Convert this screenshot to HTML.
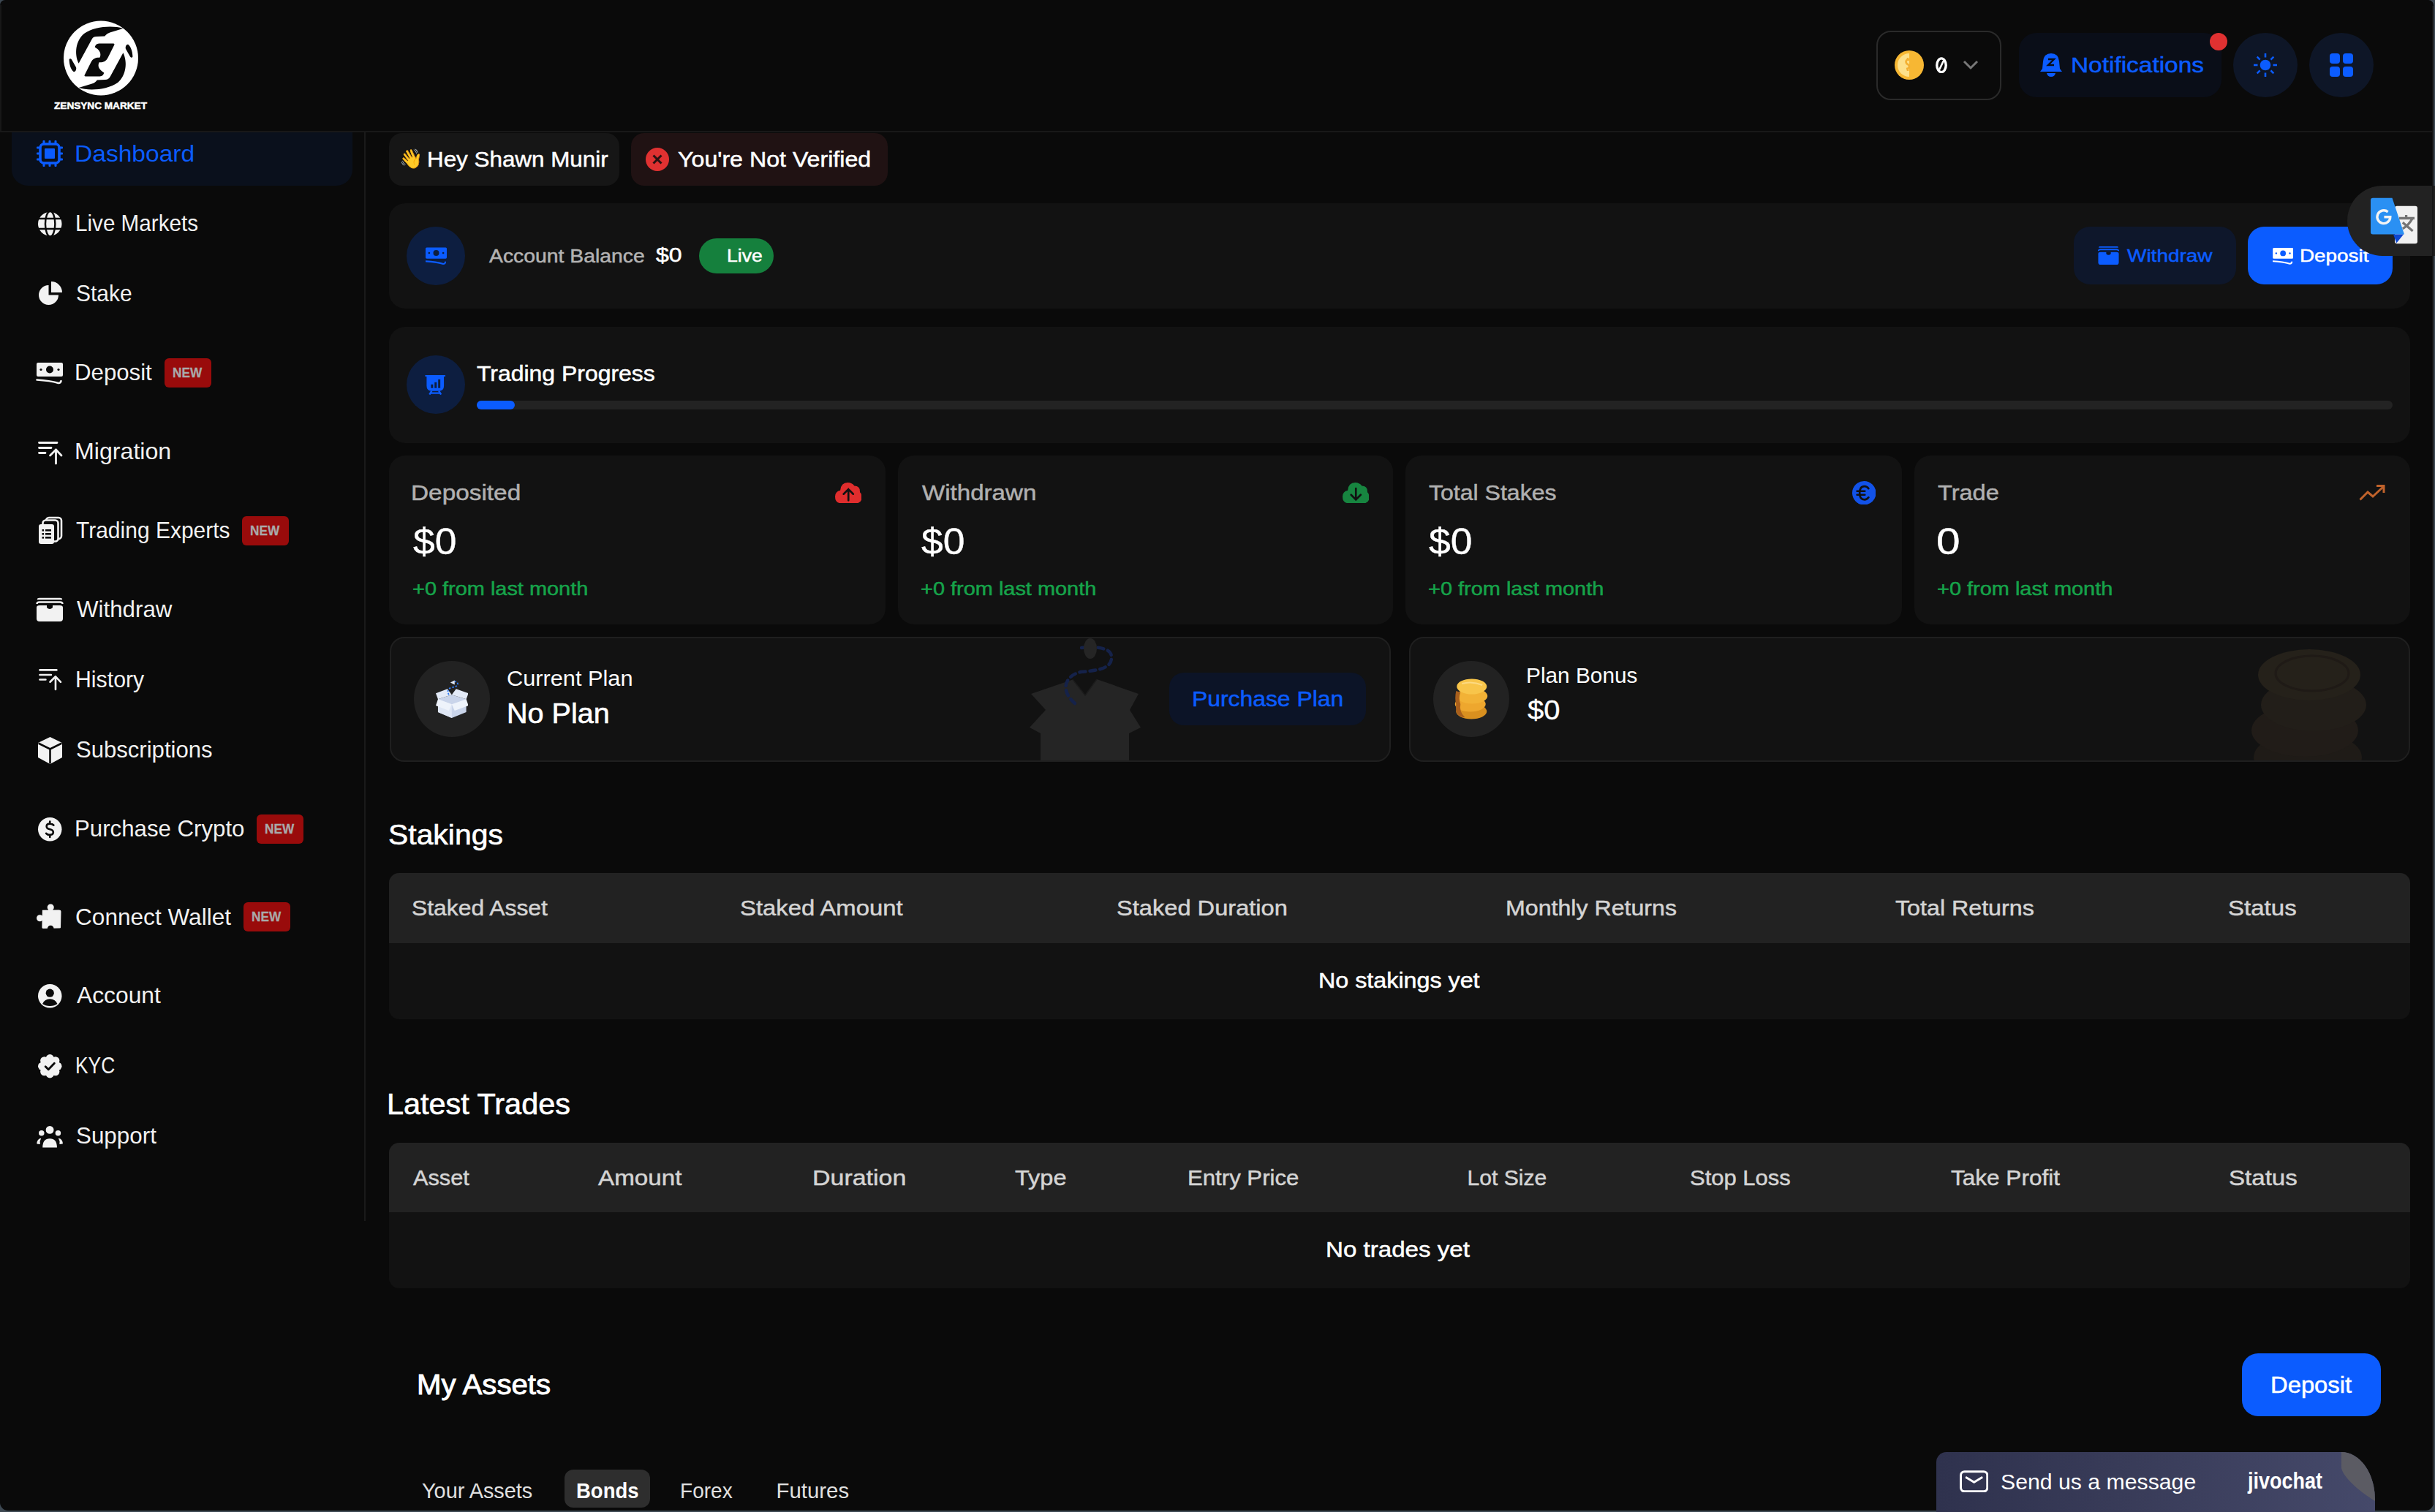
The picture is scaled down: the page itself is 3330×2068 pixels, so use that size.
<!DOCTYPE html>
<html><head><meta charset="utf-8"><title>Dashboard</title>
<style>
html,body{margin:0;padding:0;background:#3d4852;}
body{width:3330px;height:2068px;position:relative;overflow:hidden;font-family:"Liberation Sans",sans-serif;}
</style></head><body>
<div style="position:absolute;left:0;top:0;width:3328px;height:2066px;background:#0a0a0a;border-radius:7px 7px 11px 11px;"></div>
<div style="position:absolute;left:0px;top:179px;width:3328px;height:2px;background:#181818;"></div>
<div style="position:absolute;left:0px;top:7px;width:2px;height:174px;background:#181818;"></div>
<svg style="position:absolute;left:84px;top:26px;width:108px;height:108px;" viewBox="0 0 108 108"><circle cx="54" cy="53.5" r="51" fill="#fff"/><path d="M84.3 12.9 C70 8.5 45 10 31 20 C20 29 17 47 23.6 60.7 L41.4 27.9 C43 25 45 24 48 24 L59.3 23.6 C61 21 63 19.5 67.9 17.9 Z" fill="#0a0a0a"/><path d="M45.7 38.6 C47 34.5 49 33.6 53 33.6 L71 33.6 C72.5 33.6 73 34.5 72 36 L63.5 53 C61 58 57 59.5 52 59.3 L46 59.3 C52 56 55 50 52.5 45 C51 42 48 40 45.7 38.6 Z" fill="#0a0a0a"/><path d="M10.7 57 C10 54 12.5 53.5 14 55.5 L20 66 C21 69 19 73 16.5 72 C13 69 11 63 10.7 57 Z" fill="#0a0a0a"/><g transform="rotate(180 54 53.5)"><path d="M84.3 12.9 C70 8.5 45 10 31 20 C20 29 17 47 23.6 60.7 L41.4 27.9 C43 25 45 24 48 24 L59.3 23.6 C61 21 63 19.5 67.9 17.9 Z" fill="#0a0a0a"/><path d="M10.7 57 C10 54 12.5 53.5 14 55.5 L20 66 C21 69 19 73 16.5 72 C13 69 11 63 10.7 57 Z" fill="#0a0a0a"/></g><g transform="rotate(180 54 53.5) translate(4 -5)"><path d="M45.7 38.6 C47 34.5 49 33.6 53 33.6 L71 33.6 C72.5 33.6 73 34.5 72 36 L63.5 53 C61 58 57 59.5 52 59.3 L46 59.3 C52 56 55 50 52.5 45 C51 42 48 40 45.7 38.6 Z" fill="#0a0a0a"/></g></svg>
<span id="t1" style="position:absolute;left:74.19px;top:137.92px;font-size:13.08px;line-height:13.08px;font-weight:700;color:#fff;white-space:nowrap;font-family:'Liberation Sans', sans-serif;transform:scaleX(1.0399);transform-origin:0 0;-webkit-text-stroke:0.5px #fff;">ZENSYNC MARKET</span>
<div style="position:absolute;left:2565.5px;top:41.5px;width:171.0px;height:95.0px;background:transparent;border-radius:20px;box-sizing:border-box;border:2.5px solid #2a2a2a;"></div>
<svg style="position:absolute;left:2591px;top:69px;width:40px;height:40px;" viewBox="0 0 40 40"><circle cx="20" cy="20" r="20" fill="#f7b733"/><path d="M20 4 A16 16 0 0 0 20 36 Z" fill="#fde08a"/><path d="M20 13 Q16 12 15.5 15 Q15.5 18 18 19 Q20 20 20 22 Q20 25 16 25 M18 10 V13 M18 25 V28" stroke="#f3b033" stroke-width="2.6" fill="none"/></svg>
<svg style="position:absolute;left:2647px;top:77.5px;width:16px;height:22.5px;" viewBox="0 0 16 22.5"><ellipse cx="8" cy="11.25" rx="6.2" ry="9.4" fill="none" stroke="#fff" stroke-width="3.4"/><path d="M10.5 6 L5.5 16.5" stroke="#fff" stroke-width="2.6" stroke-linecap="round"/></svg>
<svg style="position:absolute;left:2684px;top:82px;width:22px;height:14px;" viewBox="0 0 22 14"><path d="M2 2 L11 11 L20 2" stroke="#777" stroke-width="3" fill="none"/></svg>
<div style="position:absolute;left:2761px;top:45px;width:277px;height:88px;background:#0a0e18;border-radius:24px;"></div>
<svg style="position:absolute;left:2790px;top:72px;width:30px;height:33px;" viewBox="0 0 30 33"><path d="M15 1 Q25 1 26 12 L27 22 L30 26 H0 L3 22 L4 12 Q5 1 15 1 Z" fill="#0b5cff"/><path d="M9 28 Q10 33 15 33 Q20 33 21 28 Z" fill="#0b5cff"/><path d="M11 9 H19 L11 17 H19" stroke="#0a0e18" stroke-width="2.4" fill="none"/></svg>
<span id="t2" style="position:absolute;left:2832.26px;top:74.02px;font-size:29.51px;line-height:29.51px;font-weight:400;color:#0b5cff;white-space:nowrap;font-family:'Liberation Sans', sans-serif;transform:scaleX(1.1323);transform-origin:0 0;-webkit-text-stroke:0.50px #0b5cff;">Notifications</span>
<svg style="position:absolute;left:3022px;top:45px;width:24px;height:24px;" viewBox="0 0 24 24"><circle cx="12" cy="12" r="12" fill="#e03131"/></svg>
<div style="position:absolute;left:3054px;top:45px;width:88px;height:88px;background:#0e1627;border-radius:50%;"></div>
<svg style="position:absolute;left:3082px;top:73px;width:32px;height:32px;" viewBox="0 0 32 32"><circle cx="16" cy="16" r="7.3" fill="#0b5cff"/><line x1="26.50" y1="16.00" x2="32.00" y2="16.00" stroke="#0b5cff" stroke-width="2.6"/><line x1="23.42" y1="23.42" x2="27.31" y2="27.31" stroke="#0b5cff" stroke-width="2.6"/><line x1="16.00" y1="26.50" x2="16.00" y2="32.00" stroke="#0b5cff" stroke-width="2.6"/><line x1="8.58" y1="23.42" x2="4.69" y2="27.31" stroke="#0b5cff" stroke-width="2.6"/><line x1="5.50" y1="16.00" x2="0.00" y2="16.00" stroke="#0b5cff" stroke-width="2.6"/><line x1="8.58" y1="8.58" x2="4.69" y2="4.69" stroke="#0b5cff" stroke-width="2.6"/><line x1="16.00" y1="5.50" x2="16.00" y2="0.00" stroke="#0b5cff" stroke-width="2.6"/><line x1="23.42" y1="8.58" x2="27.31" y2="4.69" stroke="#0b5cff" stroke-width="2.6"/></svg>
<div style="position:absolute;left:3158px;top:45px;width:88px;height:88px;background:#0e1627;border-radius:50%;"></div>
<svg style="position:absolute;left:3186px;top:73px;width:32px;height:32px;" viewBox="0 0 32 32"><rect x="0" y="0" width="14" height="14" rx="4" fill="#0b5cff"/><rect x="18" y="0" width="14" height="14" rx="4" fill="#0b5cff"/><rect x="0" y="18" width="14" height="14" rx="4" fill="#0b5cff"/><rect x="18" y="18" width="14" height="14" rx="4" fill="#0b5cff"/></svg>
<div style="position:absolute;left:498px;top:181px;width:2px;height:1489px;background:#1a1a1a;"></div>
<div style="position:absolute;left:16px;top:181px;width:466px;height:73px;background:#0a101c;border-radius:0 0 22px 22px;"></div>
<span id="t3" style="position:absolute;left:102.25px;top:194.56px;font-size:30.52px;line-height:30.52px;font-weight:400;color:#0b5cff;white-space:nowrap;font-family:'Liberation Sans', sans-serif;transform:scaleX(1.0999);transform-origin:0 0;">Dashboard</span>
<svg style="position:absolute;left:50px;top:192px;width:36px;height:36px;overflow:visible;" viewBox="0 0 36 36"><rect x="8.5" y="0" width="3" height="6" rx="1" fill="#0b5cff"/><rect x="8.5" y="30" width="3" height="6" rx="1" fill="#0b5cff"/><rect x="0" y="8.5" width="6" height="3" ry="1" fill="#0b5cff"/><rect x="30" y="8.5" width="6" height="3" ry="1" fill="#0b5cff"/><rect x="16.5" y="0" width="3" height="6" rx="1" fill="#0b5cff"/><rect x="16.5" y="30" width="3" height="6" rx="1" fill="#0b5cff"/><rect x="0" y="16.5" width="6" height="3" ry="1" fill="#0b5cff"/><rect x="30" y="16.5" width="6" height="3" ry="1" fill="#0b5cff"/><rect x="24.5" y="0" width="3" height="6" rx="1" fill="#0b5cff"/><rect x="24.5" y="30" width="3" height="6" rx="1" fill="#0b5cff"/><rect x="0" y="24.5" width="6" height="3" ry="1" fill="#0b5cff"/><rect x="30" y="24.5" width="6" height="3" ry="1" fill="#0b5cff"/><rect x="5" y="5" width="26" height="26" rx="5" fill="none" stroke="#0b5cff" stroke-width="3.6"/><rect x="11" y="11" width="14" height="14" rx="1" fill="#0b5cff"/></svg>
<span id="t4" style="position:absolute;left:102.57px;top:290.46px;font-size:30.52px;line-height:30.52px;font-weight:400;color:#f2f2f2;white-space:nowrap;font-family:'Liberation Sans', sans-serif;transform:scaleX(0.9712);transform-origin:0 0;">Live Markets</span>
<svg style="position:absolute;left:51.7px;top:290px;width:32.5px;height:32.5px;overflow:visible;" viewBox="0 0 32 32"><circle cx="16" cy="16" r="16" fill="#f2f2f2"/><ellipse cx="16.4" cy="16" rx="6.6" ry="17" fill="none" stroke="#0a0a0a" stroke-width="2.4"/><path d="M0 8.8 H32 M0 22.6 H32" stroke="#0a0a0a" stroke-width="2.4"/></svg>
<span id="t5" style="position:absolute;left:103.64px;top:386.16px;font-size:30.52px;line-height:30.52px;font-weight:400;color:#f2f2f2;white-space:nowrap;font-family:'Liberation Sans', sans-serif;transform:scaleX(0.9827);transform-origin:0 0;">Stake</span>
<svg style="position:absolute;left:51.5px;top:385.4px;width:33px;height:33px;overflow:visible;" viewBox="0 0 33 33"><path d="M14.5 5 A13.5 13.5 0 1 0 28 18.5 H14.5 Z" fill="#f2f2f2"/><path d="M18 0 A15 15 0 0 1 33 15 H18 Z" fill="#f2f2f2"/></svg>
<span id="t6" style="position:absolute;left:102.44px;top:494.06px;font-size:30.52px;line-height:30.52px;font-weight:400;color:#f2f2f2;white-space:nowrap;font-family:'Liberation Sans', sans-serif;transform:scaleX(1.0224);transform-origin:0 0;">Deposit</span>
<svg style="position:absolute;left:50px;top:495.7px;width:36px;height:30px;overflow:visible;" viewBox="0 0 36 30"><rect x="0" y="0" width="36" height="19" rx="2" fill="#f2f2f2"/><circle cx="18" cy="9.5" r="5" fill="#0a0a0a"/><circle cx="6" cy="9.5" r="1.6" fill="#0a0a0a"/><circle cx="30" cy="9.5" r="1.6" fill="#0a0a0a"/><path d="M0.5 23.5 Q18 24.5 30 28 Q33 28 33.5 25" stroke="#f2f2f2" stroke-width="2.6" fill="none" stroke-linecap="round"/></svg>
<span id="t7" style="position:absolute;left:102.36px;top:602.46px;font-size:30.52px;line-height:30.52px;font-weight:400;color:#f2f2f2;white-space:nowrap;font-family:'Liberation Sans', sans-serif;transform:scaleX(1.0535);transform-origin:0 0;">Migration</span>
<svg style="position:absolute;left:51.5px;top:603.8px;width:33px;height:31px;overflow:visible;" viewBox="0 0 33 31"><path d="M1.5 1.5 H26 M1.5 8.5 H18 M1.5 15.5 H10 M24.5 30 V11 M16.5 19 L24.5 11 L32 19" stroke="#f2f2f2" stroke-width="2.8" fill="none" stroke-linecap="round" stroke-linejoin="round"/></svg>
<span id="t8" style="position:absolute;left:104.33px;top:709.96px;font-size:30.52px;line-height:30.52px;font-weight:400;color:#f2f2f2;white-space:nowrap;font-family:'Liberation Sans', sans-serif;transform:scaleX(0.9827);transform-origin:0 0;">Trading Experts</span>
<svg style="position:absolute;left:52.9px;top:708px;width:31px;height:36px;overflow:visible;" viewBox="0 0 31 36"><rect x="10" y="0" width="21" height="29" rx="4" fill="none" stroke="#f2f2f2" stroke-width="2.6"/><rect x="5.5" y="3.5" width="21" height="29" rx="4" fill="#0a0a0a" stroke="#f2f2f2" stroke-width="2.6"/><rect x="0" y="9" width="21" height="27" rx="3" fill="#f2f2f2"/><rect x="4.5" y="16" width="2.6" height="2.6" fill="#0a0a0a"/><rect x="9" y="16" width="8" height="2.6" fill="#0a0a0a"/><rect x="4.5" y="21" width="2.6" height="2.6" fill="#0a0a0a"/><rect x="9" y="21" width="8" height="2.6" fill="#0a0a0a"/><rect x="4.5" y="26" width="2.6" height="2.6" fill="#0a0a0a"/><rect x="9" y="26" width="8" height="2.6" fill="#0a0a0a"/></svg>
<span id="t9" style="position:absolute;left:104.86px;top:818.16px;font-size:30.52px;line-height:30.52px;font-weight:400;color:#f2f2f2;white-space:nowrap;font-family:'Liberation Sans', sans-serif;transform:scaleX(1.0257);transform-origin:0 0;">Withdraw</span>
<svg style="position:absolute;left:50px;top:817.8px;width:36px;height:32px;overflow:visible;" viewBox="0 0 36 32"><path d="M2 2.2 Q2 1 4 1 H32 Q34 1 34 2.2" stroke="#f2f2f2" stroke-width="2.4" fill="none"/><path d="M0.5 8 Q0.5 5.5 4 5.5 H32 Q35.5 5.5 35.5 8" stroke="#f2f2f2" stroke-width="2.4" fill="none"/><path d="M0 13 Q0 10 4 10 H32 Q36 10 36 13 V28 Q36 32 32 32 H4 Q0 32 0 28 Z" fill="#f2f2f2"/><path d="M14 10 V13 Q18 17 22 13 V10 Z" fill="#0a0a0a"/></svg>
<span id="t10" style="position:absolute;left:102.51px;top:914.36px;font-size:30.52px;line-height:30.52px;font-weight:400;color:#f2f2f2;white-space:nowrap;font-family:'Liberation Sans', sans-serif;transform:scaleX(0.9925);transform-origin:0 0;">History</span>
<svg style="position:absolute;left:51.5px;top:915.4px;width:33px;height:29px;overflow:visible;" viewBox="0 0 33 31"><path d="M1.5 1.5 H26 M1.5 8.5 H18 M1.5 15.5 H10 M24.5 30 V11 M16.5 19 L24.5 11 L32 19" stroke="#f2f2f2" stroke-width="2.8" fill="none" stroke-linecap="round" stroke-linejoin="round"/></svg>
<span id="t11" style="position:absolute;left:103.59px;top:1010.16px;font-size:30.52px;line-height:30.52px;font-weight:400;color:#f2f2f2;white-space:nowrap;font-family:'Liberation Sans', sans-serif;transform:scaleX(1.0183);transform-origin:0 0;">Subscriptions</span>
<svg style="position:absolute;left:51.5px;top:1007.7px;width:33px;height:37px;overflow:visible;" viewBox="0 0 33 37"><path d="M16.5 0 L33 8 V28 L16.5 37 L0 28 V8 Z" fill="#f2f2f2"/><path d="M0.5 8.5 L16.5 16.5 L32.5 8.5 M16.5 16.5 V36.5" stroke="#0a0a0a" stroke-width="2.6" fill="none"/></svg>
<span id="t12" style="position:absolute;left:102.44px;top:1118.16px;font-size:30.52px;line-height:30.52px;font-weight:400;color:#f2f2f2;white-space:nowrap;font-family:'Liberation Sans', sans-serif;transform:scaleX(1.0228);transform-origin:0 0;">Purchase Crypto</span>
<svg style="position:absolute;left:51.5px;top:1117.8px;width:32.5px;height:32.5px;overflow:visible;" viewBox="0 0 32 32"><circle cx="16" cy="16" r="16" fill="#f2f2f2"/><path d="M21 10.5 Q19.5 8.5 16 8.5 Q11.5 8.5 11.5 12 Q11.5 15 16 16 Q20.5 17 20.5 20 Q20.5 23.5 16 23.5 Q12.5 23.5 11 21.5 M16 5.5 V8.5 M16 23.5 V26.5" stroke="#0a0a0a" stroke-width="2.6" fill="none" stroke-linecap="round"/></svg>
<span id="t13" style="position:absolute;left:103.40px;top:1238.76px;font-size:30.52px;line-height:30.52px;font-weight:400;color:#f2f2f2;white-space:nowrap;font-family:'Liberation Sans', sans-serif;transform:scaleX(1.0352);transform-origin:0 0;">Connect Wallet</span>
<svg style="position:absolute;left:50.3px;top:1236px;width:34.5px;height:34.5px;overflow:visible;" viewBox="0 0 35 35"><path d="M8 9 L31 8.5 Q34 8.5 34 11 L33.5 33 Q33.5 34 32 34 L9 34.5 Q7.5 34.5 7.5 33 Z" fill="#f2f2f2"/><circle cx="19.5" cy="5" r="4.6" fill="#f2f2f2"/><rect x="16.5" y="5" width="6" height="5" fill="#f2f2f2"/><circle cx="4.6" cy="20" r="4.6" fill="#f2f2f2"/><rect x="4.6" y="17" width="5" height="6" fill="#f2f2f2"/><circle cx="19.5" cy="34.5" r="4.4" fill="#0a0a0a"/></svg>
<span id="t14" style="position:absolute;left:104.94px;top:1346.26px;font-size:30.52px;line-height:30.52px;font-weight:400;color:#f2f2f2;white-space:nowrap;font-family:'Liberation Sans', sans-serif;transform:scaleX(1.0420);transform-origin:0 0;">Account</span>
<svg style="position:absolute;left:51.5px;top:1346px;width:32.5px;height:32.5px;overflow:visible;" viewBox="0 0 32 32"><circle cx="16" cy="16" r="16" fill="#f2f2f2"/><circle cx="16" cy="12" r="5.5" fill="#0a0a0a"/><path d="M6 26.5 Q9 20 16 20 Q23 20 26 26.5 Q22 29.5 16 29.5 Q10 29.5 6 26.5 Z" fill="#0a0a0a"/></svg>
<span id="t15" style="position:absolute;left:102.84px;top:1442.16px;font-size:30.52px;line-height:30.52px;font-weight:400;color:#f2f2f2;white-space:nowrap;font-family:'Liberation Sans', sans-serif;transform:scaleX(0.8632);transform-origin:0 0;">KYC</span>
<svg style="position:absolute;left:51.5px;top:1441.7px;width:32.5px;height:32.5px;overflow:visible;" viewBox="0 0 32 32"><circle cx="26.50" cy="16.00" r="5.5" fill="#f2f2f2"/><circle cx="23.42" cy="23.42" r="5.5" fill="#f2f2f2"/><circle cx="16.00" cy="26.50" r="5.5" fill="#f2f2f2"/><circle cx="8.58" cy="23.42" r="5.5" fill="#f2f2f2"/><circle cx="5.50" cy="16.00" r="5.5" fill="#f2f2f2"/><circle cx="8.58" cy="8.58" r="5.5" fill="#f2f2f2"/><circle cx="16.00" cy="5.50" r="5.5" fill="#f2f2f2"/><circle cx="23.42" cy="8.58" r="5.5" fill="#f2f2f2"/><circle cx="16" cy="16" r="12" fill="#f2f2f2"/><path d="M10 16.5 L14 20.5 L22 12" stroke="#0a0a0a" stroke-width="2.8" fill="none" stroke-linecap="round" stroke-linejoin="round"/></svg>
<span id="t16" style="position:absolute;left:103.58px;top:1538.46px;font-size:30.52px;line-height:30.52px;font-weight:400;color:#f2f2f2;white-space:nowrap;font-family:'Liberation Sans', sans-serif;transform:scaleX(1.0277);transform-origin:0 0;">Support</span>
<svg style="position:absolute;left:50px;top:1539.9px;width:36.2px;height:30.5px;overflow:visible;" viewBox="0 0 36 31"><circle cx="18" cy="5.5" r="5.5" fill="#f2f2f2"/><circle cx="6.5" cy="10" r="3.8" fill="#f2f2f2"/><circle cx="29.5" cy="10" r="3.8" fill="#f2f2f2"/><path d="M8 30 Q8 17.5 18 17.5 Q28 17.5 28 30 Z" fill="#f2f2f2"/><path d="M0 25 Q0 18 6 17 Q3.5 21 4.5 25.5 Z" fill="#f2f2f2"/><path d="M36 25 Q36 18 30 17 Q32.5 21 31.5 25.5 Z" fill="#f2f2f2"/></svg>
<div style="position:absolute;left:225px;top:490px;width:64px;height:40px;background:#990b0b;border-radius:6px;"></div>
<span id="t17" style="position:absolute;left:235.85px;top:500.25px;font-size:19.19px;line-height:19.19px;font-weight:700;color:#a9a9a9;white-space:nowrap;font-family:'Liberation Sans', sans-serif;transform:scaleX(0.8973);transform-origin:0 0;-webkit-text-stroke:0.3px #a9a9a9;">NEW</span>
<div style="position:absolute;left:331px;top:706px;width:64px;height:40px;background:#990b0b;border-radius:6px;"></div>
<span id="t18" style="position:absolute;left:341.85px;top:716.25px;font-size:19.19px;line-height:19.19px;font-weight:700;color:#a9a9a9;white-space:nowrap;font-family:'Liberation Sans', sans-serif;transform:scaleX(0.8973);transform-origin:0 0;-webkit-text-stroke:0.3px #a9a9a9;">NEW</span>
<div style="position:absolute;left:351px;top:1114px;width:64px;height:40px;background:#990b0b;border-radius:6px;"></div>
<span id="t19" style="position:absolute;left:361.85px;top:1124.25px;font-size:19.19px;line-height:19.19px;font-weight:700;color:#a9a9a9;white-space:nowrap;font-family:'Liberation Sans', sans-serif;transform:scaleX(0.8973);transform-origin:0 0;-webkit-text-stroke:0.3px #a9a9a9;">NEW</span>
<div style="position:absolute;left:333px;top:1234px;width:64px;height:40px;background:#990b0b;border-radius:6px;"></div>
<span id="t20" style="position:absolute;left:343.85px;top:1244.25px;font-size:19.19px;line-height:19.19px;font-weight:700;color:#a9a9a9;white-space:nowrap;font-family:'Liberation Sans', sans-serif;transform:scaleX(0.8973);transform-origin:0 0;-webkit-text-stroke:0.3px #a9a9a9;">NEW</span>
<div style="position:absolute;left:532px;top:182px;width:315px;height:72px;background:#161616;border-radius:18px;"></div>
<div style="position:absolute;left:546px;top:200px;width:32px;height:34px;font-size:26px;line-height:34px;">&#128075;</div>
<span id="t21" style="position:absolute;left:583.93px;top:202.48px;font-size:30.38px;line-height:30.38px;font-weight:400;color:#fff;white-space:nowrap;font-family:'Liberation Sans', sans-serif;transform:scaleX(1.0328);transform-origin:0 0;-webkit-text-stroke:0.50px #fff;">Hey Shawn Munir</span>
<div style="position:absolute;left:863px;top:182px;width:351px;height:72px;background:#201213;border-radius:18px;"></div>
<svg style="position:absolute;left:883px;top:202px;width:32px;height:32px;" viewBox="0 0 32 32"><circle cx="16" cy="16" r="16" fill="#e03131"/><path d="M10.5 10.5 L21.5 21.5 M21.5 10.5 L10.5 21.5" stroke="#2a1212" stroke-width="3"/></svg>
<span id="t22" style="position:absolute;left:927.29px;top:202.65px;font-size:29.94px;line-height:29.94px;font-weight:400;color:#fff;white-space:nowrap;font-family:'Liberation Sans', sans-serif;transform:scaleX(1.0742);transform-origin:0 0;-webkit-text-stroke:0.50px #fff;">You're Not Verified</span>
<div style="position:absolute;left:532px;top:277.5px;width:2764px;height:144.5px;background:#121212;border-radius:22px;"></div>
<div style="position:absolute;left:556px;top:310px;width:80px;height:80px;background:#0d1e40;border-radius:50%;"></div>
<svg style="position:absolute;left:581.5px;top:338px;width:29px;height:25px;" viewBox="0 0 36 30"><rect x="0" y="0" width="36" height="19" rx="2" fill="#0b5cff"/><circle cx="18" cy="9.5" r="5" fill="#0d1e40"/><circle cx="6" cy="9.5" r="1.6" fill="#0d1e40"/><circle cx="30" cy="9.5" r="1.6" fill="#0d1e40"/><path d="M0.5 23.5 Q18 24.5 30 28 Q33 28 33.5 25" stroke="#0b5cff" stroke-width="2.6" fill="none" stroke-linecap="round"/></svg>
<span id="t23" style="position:absolute;left:668.54px;top:337.66px;font-size:25.44px;line-height:25.44px;font-weight:400;color:#b3b3b3;white-space:nowrap;font-family:'Liberation Sans', sans-serif;transform:scaleX(1.1142);transform-origin:0 0;-webkit-text-stroke:0.50px #b3b3b3;">Account Balance</span>
<span id="t24" style="position:absolute;left:897.16px;top:336.23px;font-size:26.89px;line-height:26.89px;font-weight:400;color:#fff;white-space:nowrap;font-family:'Liberation Sans', sans-serif;transform:scaleX(1.1902);transform-origin:0 0;-webkit-text-stroke:0.50px #fff;">$0</span>
<div style="position:absolute;left:956.3px;top:326.1px;width:101.70000000000005px;height:47.69999999999999px;background:#15803d;border-radius:24px;"></div>
<span id="t25" style="position:absolute;left:994.22px;top:338.12px;font-size:24.42px;line-height:24.42px;font-weight:400;color:#fff;white-space:nowrap;font-family:'Liberation Sans', sans-serif;transform:scaleX(1.0865);transform-origin:0 0;-webkit-text-stroke:0.50px #fff;">Live</span>
<div style="position:absolute;left:2836px;top:310.4px;width:221.69999999999982px;height:78.80000000000001px;background:#0e172b;border-radius:22px;"></div>
<svg style="position:absolute;left:2869.3px;top:337.2px;width:29px;height:25px;" viewBox="0 0 36 32"><path d="M2 2.2 Q2 1 4 1 H32 Q34 1 34 2.2" stroke="#0b5cff" stroke-width="2.4" fill="none"/><path d="M0.5 8 Q0.5 5.5 4 5.5 H32 Q35.5 5.5 35.5 8" stroke="#0b5cff" stroke-width="2.4" fill="none"/><path d="M0 13 Q0 10 4 10 H32 Q36 10 36 13 V28 Q36 32 32 32 H4 Q0 32 0 28 Z" fill="#0b5cff"/><path d="M14 10 V13 Q18 17 22 13 V10 Z" fill="#0e172b"/></svg>
<span id="t26" style="position:absolute;left:2908.88px;top:338.08px;font-size:24.71px;line-height:24.71px;font-weight:400;color:#0b5cff;white-space:nowrap;font-family:'Liberation Sans', sans-serif;transform:scaleX(1.1321);transform-origin:0 0;-webkit-text-stroke:0.50px #0b5cff;">Withdraw</span>
<div style="position:absolute;left:3074.3px;top:310.4px;width:197.39999999999964px;height:78.80000000000001px;background:#0b5cff;border-radius:22px;"></div>
<svg style="position:absolute;left:3107.7px;top:338.7px;width:28.3px;height:23.3px;" viewBox="0 0 36 30"><rect x="0" y="0" width="36" height="19" rx="2" fill="#fff"/><circle cx="18" cy="9.5" r="5" fill="#0b5cff"/><circle cx="6" cy="9.5" r="1.6" fill="#0b5cff"/><circle cx="30" cy="9.5" r="1.6" fill="#0b5cff"/><path d="M0.5 23.5 Q18 24.5 30 28 Q33 28 33.5 25" stroke="#fff" stroke-width="2.6" fill="none" stroke-linecap="round"/></svg>
<span id="t27" style="position:absolute;left:3144.71px;top:338.08px;font-size:24.71px;line-height:24.71px;font-weight:400;color:#fff;white-space:nowrap;font-family:'Liberation Sans', sans-serif;transform:scaleX(1.1280);transform-origin:0 0;-webkit-text-stroke:0.50px #fff;">Deposit</span>
<div style="position:absolute;left:3210px;top:254px;width:120px;height:96px;background:#222;border-radius:48px 0 0 48px;"></div>
<svg style="position:absolute;left:3242px;top:270px;width:65px;height:64px;" viewBox="0 0 65 64">
<rect x="33" y="11.8" width="31" height="51.4" rx="3" fill="#f1f1f1"/>
<path d="M0 3.7 Q0 0.7 3 0.7 H29.5 L46 50.5 H3 Q0 50.5 0 47.5 Z" fill="#2a90f3"/>
<path d="M31 50.5 H45 L35.3 62.6 Z" fill="#0c46d0"/>
<path d="M23.6 19.9 A8.9 8.9 0 1 0 26.8 26.7 H18.4" stroke="#f4f4f4" stroke-width="3.4" fill="none"/>
<path d="M39 28.5 H60 M48.6 24 V28.5 M43.8 34.3 L57.6 46 M57 29 Q52 38 43.8 42.8" stroke="#757575" stroke-width="3.3" fill="none"/>
</svg>
<div style="position:absolute;left:532px;top:446.5px;width:2764px;height:159.5px;background:#121212;border-radius:22px;"></div>
<div style="position:absolute;left:556px;top:486px;width:80px;height:80px;background:#0d1e40;border-radius:50%;"></div>
<svg style="position:absolute;left:581.4px;top:512.8px;width:28.5px;height:27.6px;" viewBox="0 0 28 28"><path d="M0 0 H28 V2 H26 V15 Q26 22 19 22 H9 Q2 22 2 15 V2 H0 Z" fill="#0b5cff"/><rect x="8" y="13" width="3" height="5" fill="#0d1e40"/><rect x="13" y="10" width="3" height="8" fill="#0d1e40"/><rect x="18" y="6" width="3" height="12" fill="#0d1e40"/><path d="M6 27 L9 22 M22 27 L19 22 M7 25 H21" stroke="#0b5cff" stroke-width="2.4"/></svg>
<span id="t28" style="position:absolute;left:651.78px;top:497.33px;font-size:28.78px;line-height:28.78px;font-weight:400;color:#fff;white-space:nowrap;font-family:'Liberation Sans', sans-serif;transform:scaleX(1.1103);transform-origin:0 0;-webkit-text-stroke:0.50px #fff;">Trading Progress</span>
<div style="position:absolute;left:652px;top:548px;width:2620px;height:12px;background:#232323;border-radius:6px;"></div>
<div style="position:absolute;left:652px;top:548px;width:52px;height:12px;background:#0b5cff;border-radius:6px;"></div>
<div style="position:absolute;left:532px;top:622.5px;width:679px;height:231.0px;background:#121212;border-radius:22px;"></div>
<span id="t29" style="position:absolute;left:562.46px;top:658.95px;font-size:29.94px;line-height:29.94px;font-weight:400;color:#b0b0b0;white-space:nowrap;font-family:'Liberation Sans', sans-serif;transform:scaleX(1.1140);transform-origin:0 0;-webkit-text-stroke:0.50px #b0b0b0;">Deposited</span>
<span id="t30" style="position:absolute;left:564.63px;top:715.54px;font-size:50.15px;line-height:50.15px;font-weight:400;color:#fff;white-space:nowrap;font-family:'Liberation Sans', sans-serif;transform:scaleX(1.0660);transform-origin:0 0;-webkit-text-stroke:0.4px #fff;">$0</span>
<span id="t31" style="position:absolute;left:563.79px;top:792.89px;font-size:25.87px;line-height:25.87px;font-weight:400;color:#16a34a;white-space:nowrap;font-family:'Liberation Sans', sans-serif;transform:scaleX(1.1183);transform-origin:0 0;-webkit-text-stroke:0.50px #16a34a;">+0 from last month</span>
<svg style="position:absolute;left:1141.5px;top:659.8px;width:36.5px;height:28.4px;" viewBox="0 0 36 28"><path d="M9 28 Q0 28 0 19 Q0 12 7 10.5 Q8 0 17 0 Q23 0 26 4.5 Q34 4.5 33.5 13 Q36 15 36 20 Q36 28 28 28 Z" fill="#e02d2d"/><path d="M18 24 V9 M11.5 15.5 L18 9 L24.5 15.5" stroke="#111" stroke-width="2.6" fill="none" stroke-linecap="round"/></svg>
<div style="position:absolute;left:1227.5px;top:622.5px;width:677.5px;height:231.0px;background:#121212;border-radius:22px;"></div>
<span id="t32" style="position:absolute;left:1260.55px;top:658.95px;font-size:29.94px;line-height:29.94px;font-weight:400;color:#b0b0b0;white-space:nowrap;font-family:'Liberation Sans', sans-serif;transform:scaleX(1.1052);transform-origin:0 0;-webkit-text-stroke:0.50px #b0b0b0;">Withdrawn</span>
<span id="t33" style="position:absolute;left:1260.13px;top:715.54px;font-size:50.15px;line-height:50.15px;font-weight:400;color:#fff;white-space:nowrap;font-family:'Liberation Sans', sans-serif;transform:scaleX(1.0660);transform-origin:0 0;-webkit-text-stroke:0.4px #fff;">$0</span>
<span id="t34" style="position:absolute;left:1259.29px;top:792.89px;font-size:25.87px;line-height:25.87px;font-weight:400;color:#16a34a;white-space:nowrap;font-family:'Liberation Sans', sans-serif;transform:scaleX(1.1183);transform-origin:0 0;-webkit-text-stroke:0.50px #16a34a;">+0 from last month</span>
<svg style="position:absolute;left:1835.5px;top:659.8px;width:36.5px;height:28.4px;" viewBox="0 0 36 28"><path d="M9 28 Q0 28 0 19 Q0 12 7 10.5 Q8 0 17 0 Q23 0 26 4.5 Q34 4.5 33.5 13 Q36 15 36 20 Q36 28 28 28 Z" fill="#178540"/><path d="M18 8 V23 M11.5 16.5 L18 23 L24.5 16.5" stroke="#111" stroke-width="2.6" fill="none" stroke-linecap="round"/></svg>
<div style="position:absolute;left:1921.5px;top:622.5px;width:679.0px;height:231.0px;background:#121212;border-radius:22px;"></div>
<span id="t35" style="position:absolute;left:1953.98px;top:658.95px;font-size:29.94px;line-height:29.94px;font-weight:400;color:#b0b0b0;white-space:nowrap;font-family:'Liberation Sans', sans-serif;transform:scaleX(1.0699);transform-origin:0 0;-webkit-text-stroke:0.50px #b0b0b0;">Total Stakes</span>
<span id="t36" style="position:absolute;left:1954.13px;top:715.54px;font-size:50.15px;line-height:50.15px;font-weight:400;color:#fff;white-space:nowrap;font-family:'Liberation Sans', sans-serif;transform:scaleX(1.0660);transform-origin:0 0;-webkit-text-stroke:0.4px #fff;">$0</span>
<span id="t37" style="position:absolute;left:1953.29px;top:792.89px;font-size:25.87px;line-height:25.87px;font-weight:400;color:#16a34a;white-space:nowrap;font-family:'Liberation Sans', sans-serif;transform:scaleX(1.1183);transform-origin:0 0;-webkit-text-stroke:0.50px #16a34a;">+0 from last month</span>
<svg style="position:absolute;left:2532.7px;top:657.7px;width:32.5px;height:32.5px;" viewBox="0 0 32 32"><circle cx="16" cy="16" r="16" fill="#1252e8"/><path d="M22 10 Q20 7 16.5 7 Q10 7 10 16 Q10 25 16.5 25 Q20 25 22 22 M6.5 13.5 H17 M6.5 18.5 H17" stroke="#111" stroke-width="2.6" fill="none" stroke-linecap="round"/></svg>
<div style="position:absolute;left:2617.5px;top:622.5px;width:678.5px;height:231.0px;background:#121212;border-radius:22px;"></div>
<span id="t38" style="position:absolute;left:2649.97px;top:658.95px;font-size:29.94px;line-height:29.94px;font-weight:400;color:#b0b0b0;white-space:nowrap;font-family:'Liberation Sans', sans-serif;transform:scaleX(1.0865);transform-origin:0 0;-webkit-text-stroke:0.50px #b0b0b0;">Trade</span>
<span id="t39" style="position:absolute;left:2648.41px;top:715.54px;font-size:50.15px;line-height:50.15px;font-weight:400;color:#fff;white-space:nowrap;font-family:'Liberation Sans', sans-serif;transform:scaleX(1.1680);transform-origin:0 0;-webkit-text-stroke:0.4px #fff;">0</span>
<span id="t40" style="position:absolute;left:2649.29px;top:792.89px;font-size:25.87px;line-height:25.87px;font-weight:400;color:#16a34a;white-space:nowrap;font-family:'Liberation Sans', sans-serif;transform:scaleX(1.1183);transform-origin:0 0;-webkit-text-stroke:0.50px #16a34a;">+0 from last month</span>
<svg style="position:absolute;left:3225.8px;top:662.6px;width:36px;height:22px;" viewBox="0 0 36 22"><path d="M1.5 20.5 L12 10 L19 16 L33 3 M24 1.5 H34 V11" stroke="#c0622b" stroke-width="3" fill="none"/></svg>
<div style="position:absolute;left:532.5px;top:870.5px;width:1369.0px;height:171.0px;background:#121212;border-radius:20px;box-sizing:border-box;border:2px solid #1f1f1f;"></div>
<div style="position:absolute;left:566px;top:904px;width:104px;height:104px;background:#222;border-radius:50%;"></div>
<svg style="position:absolute;left:595.7px;top:929.6px;width:44.6px;height:52.4px;" viewBox="0 0 45 52">
<path d="M22 20 L42 26 L42 44 L22 52 L3 44 L3 26 Z" fill="#c9d4ea"/>
<path d="M3 26 L22 20 L16 12 L0 18 Z" fill="#e3eaf7"/>
<path d="M42 26 L22 20 L28 12 L45 18 Z" fill="#e3eaf7"/>
<path d="M3 26 L22 33 L22 52 L3 44 Z" fill="#dfe7f5"/>
<path d="M22 33 L42 26 L45 35 L26 42 Z" fill="#eef3fb"/>
<path d="M3 26 L22 33 L18 42 L0 35 Z" fill="#eef3fb"/>
<path d="M18 20 Q14 12 22 10 Q32 8 30 4 Q28 1 24 2" stroke="#2f7cf6" stroke-width="1.8" stroke-dasharray="2.5 2" fill="none"/>
<path d="M26 0 L20 3 L26 6 Z" fill="#dfe7f5"/>
</svg>
<span id="t41" style="position:absolute;left:693.34px;top:913.34px;font-size:29.36px;line-height:29.36px;font-weight:400;color:#fff;white-space:nowrap;font-family:'Liberation Sans', sans-serif;transform:scaleX(1.0469);transform-origin:0 0;">Current Plan</span>
<span id="t42" style="position:absolute;left:692.65px;top:956.96px;font-size:38.08px;line-height:38.08px;font-weight:400;color:#fff;white-space:nowrap;font-family:'Liberation Sans', sans-serif;transform:scaleX(1.0395);transform-origin:0 0;-webkit-text-stroke:0.61px #fff;">No Plan</span>
<div style="position:absolute;left:1407px;top:871px;width:156px;height:169px;overflow:hidden;"><svg style="position:absolute;left:0px;top:0px;width:156px;height:180px;" viewBox="0 0 156 180">
<polygon points="3.0,78.0 60.0,58.5 77.0,80.0 93.0,58.0 150.0,78.0 138.0,100.0 153.0,124.0 137.0,132.0 137.0,174.0 16.0,174.0 16.0,132.0 1.0,124.0 23.0,100.0" fill="#252525"/>
<path d="M60 58.5 L77 80 L93 58" stroke="#1c1c1c" stroke-width="1.5" fill="none"/>
<path d="M63.0 91.0 C43.0 74.0 48.0 54.0 71.0 48.0 C93.0 46.0 115.0 44.0 113.0 26.0 C111.0 15.0 93.0 13.0 72.0 15.0" stroke="#15224a" stroke-width="4.5" stroke-dasharray="8 6" stroke-linecap="round" fill="none"/>
<ellipse cx="84" cy="16" rx="9" ry="14" fill="#252525"/>
</svg></div>
<div style="position:absolute;left:1599.2px;top:919.9px;width:268.39999999999986px;height:71.80000000000007px;background:#0c1427;border-radius:20px;"></div>
<span id="t43" style="position:absolute;left:1629.89px;top:941.34px;font-size:29.36px;line-height:29.36px;font-weight:400;color:#0b5cff;white-space:nowrap;font-family:'Liberation Sans', sans-serif;transform:scaleX(1.0850);transform-origin:0 0;-webkit-text-stroke:0.50px #0b5cff;">Purchase Plan</span>
<div style="position:absolute;left:1926.5px;top:870.5px;width:1369.5px;height:171.0px;background:#121212;border-radius:20px;box-sizing:border-box;border:2px solid #1f1f1f;"></div>
<div style="position:absolute;left:1960px;top:904px;width:104px;height:104px;background:#222;border-radius:50%;"></div>
<svg style="position:absolute;left:1988.7px;top:927.4px;width:46.5px;height:57px;" viewBox="0 0 46 57">
<ellipse cx="23" cy="46" rx="21" ry="10.5" fill="#d9901f"/>
<ellipse cx="21.5" cy="36" rx="21" ry="10.5" fill="#eea72e"/>
<ellipse cx="24" cy="25" rx="21" ry="10.5" fill="#f2b236"/>
<ellipse cx="23.5" cy="12" rx="20.5" ry="10.5" fill="#f8c54a"/>
<path d="M2 18 Q0 28 2 36 Q1 46 4 50 Q10 55 14 54 Q6 46 8 36 Q5 28 8 20 Z" fill="#a85f1c"/>
<path d="M10 8 Q24 4 38 10" stroke="#fde39a" stroke-width="2" fill="none" opacity=".7"/>
</svg>
<span id="t44" style="position:absolute;left:2086.85px;top:909.12px;font-size:29.51px;line-height:29.51px;font-weight:400;color:#fff;white-space:nowrap;font-family:'Liberation Sans', sans-serif;transform:scaleX(1.0108);transform-origin:0 0;">Plan Bonus</span>
<span id="t45" style="position:absolute;left:2088.87px;top:954.03px;font-size:36.34px;line-height:36.34px;font-weight:400;color:#fff;white-space:nowrap;font-family:'Liberation Sans', sans-serif;transform:scaleX(1.1007);transform-origin:0 0;-webkit-text-stroke:0.35px #fff;">$0</span>
<div style="position:absolute;left:3070px;top:871px;width:180px;height:169px;overflow:hidden;"><svg style="position:absolute;left:0px;top:0px;width:180px;height:190px;" viewBox="0 0 180 190">
<ellipse cx="86" cy="165" rx="74" ry="36" fill="#1f1b17"/>
<ellipse cx="82" cy="128" rx="73" ry="36" fill="#211c18"/>
<ellipse cx="94" cy="93" rx="72" ry="36" fill="#221e19"/>
<ellipse cx="88" cy="52" rx="70" ry="35" fill="#25211a"/>
<ellipse cx="92" cy="50" rx="50" ry="24" fill="none" stroke="#1f1a16" stroke-width="3"/>
</svg></div>
<span id="t46" style="position:absolute;left:531.14px;top:1122.25px;font-size:39.39px;line-height:39.39px;font-weight:400;color:#fff;white-space:nowrap;font-family:'Liberation Sans', sans-serif;transform:scaleX(1.0384);transform-origin:0 0;-webkit-text-stroke:0.63px #fff;">Stakings</span>
<div style="position:absolute;left:532px;top:1194px;width:2764px;height:199.70000000000005px;background:#121212;border-radius:14px;overflow:hidden;"></div>
<div style="position:absolute;left:532px;top:1194px;width:2764px;height:96px;background:#222;border-radius:14px 14px 0 0;"></div>
<span id="t47" style="position:absolute;left:563.05px;top:1226.82px;font-size:30.09px;line-height:30.09px;font-weight:400;color:#d4d4d4;white-space:nowrap;font-family:'Liberation Sans', sans-serif;transform:scaleX(1.0587);transform-origin:0 0;-webkit-text-stroke:0.50px #d4d4d4;">Staked Asset</span>
<span id="t48" style="position:absolute;left:1012.01px;top:1226.82px;font-size:30.09px;line-height:30.09px;font-weight:400;color:#d4d4d4;white-space:nowrap;font-family:'Liberation Sans', sans-serif;transform:scaleX(1.0908);transform-origin:0 0;-webkit-text-stroke:0.50px #d4d4d4;">Staked Amount</span>
<span id="t49" style="position:absolute;left:1527.22px;top:1226.82px;font-size:30.09px;line-height:30.09px;font-weight:400;color:#d4d4d4;white-space:nowrap;font-family:'Liberation Sans', sans-serif;transform:scaleX(1.0844);transform-origin:0 0;-webkit-text-stroke:0.50px #d4d4d4;">Staked Duration</span>
<span id="t50" style="position:absolute;left:2058.86px;top:1226.82px;font-size:30.09px;line-height:30.09px;font-weight:400;color:#d4d4d4;white-space:nowrap;font-family:'Liberation Sans', sans-serif;transform:scaleX(1.0685);transform-origin:0 0;-webkit-text-stroke:0.50px #d4d4d4;">Monthly Returns</span>
<span id="t51" style="position:absolute;left:2592.18px;top:1226.82px;font-size:30.09px;line-height:30.09px;font-weight:400;color:#d4d4d4;white-space:nowrap;font-family:'Liberation Sans', sans-serif;transform:scaleX(1.0709);transform-origin:0 0;-webkit-text-stroke:0.50px #d4d4d4;">Total Returns</span>
<span id="t52" style="position:absolute;left:3046.50px;top:1226.82px;font-size:30.09px;line-height:30.09px;font-weight:400;color:#d4d4d4;white-space:nowrap;font-family:'Liberation Sans', sans-serif;transform:scaleX(1.0987);transform-origin:0 0;-webkit-text-stroke:0.50px #d4d4d4;">Status</span>
<span id="t53" style="position:absolute;left:1802.85px;top:1327.39px;font-size:29.07px;line-height:29.07px;font-weight:400;color:#fff;white-space:nowrap;font-family:'Liberation Sans', sans-serif;transform:scaleX(1.1102);transform-origin:0 0;-webkit-text-stroke:0.50px #fff;">No stakings yet</span>
<span id="t54" style="position:absolute;left:529.30px;top:1489.54px;font-size:40.70px;line-height:40.70px;font-weight:400;color:#fff;white-space:nowrap;font-family:'Liberation Sans', sans-serif;transform:scaleX(1.0177);transform-origin:0 0;-webkit-text-stroke:0.65px #fff;">Latest Trades</span>
<div style="position:absolute;left:532px;top:1562.5px;width:2764px;height:199.0px;background:#121212;border-radius:14px;"></div>
<div style="position:absolute;left:532px;top:1562.5px;width:2764px;height:95px;background:#222;border-radius:14px 14px 0 0;"></div>
<span id="t55" style="position:absolute;left:564.94px;top:1595.72px;font-size:30.09px;line-height:30.09px;font-weight:400;color:#d4d4d4;white-space:nowrap;font-family:'Liberation Sans', sans-serif;transform:scaleX(1.0219);transform-origin:0 0;-webkit-text-stroke:0.50px #d4d4d4;">Asset</span>
<span id="t56" style="position:absolute;left:818.14px;top:1595.72px;font-size:30.09px;line-height:30.09px;font-weight:400;color:#d4d4d4;white-space:nowrap;font-family:'Liberation Sans', sans-serif;transform:scaleX(1.1036);transform-origin:0 0;-webkit-text-stroke:0.50px #d4d4d4;">Amount</span>
<span id="t57" style="position:absolute;left:1110.72px;top:1595.72px;font-size:30.09px;line-height:30.09px;font-weight:400;color:#d4d4d4;white-space:nowrap;font-family:'Liberation Sans', sans-serif;transform:scaleX(1.1283);transform-origin:0 0;-webkit-text-stroke:0.50px #d4d4d4;">Duration</span>
<span id="t58" style="position:absolute;left:1387.87px;top:1595.72px;font-size:30.09px;line-height:30.09px;font-weight:400;color:#d4d4d4;white-space:nowrap;font-family:'Liberation Sans', sans-serif;transform:scaleX(1.0806);transform-origin:0 0;-webkit-text-stroke:0.50px #d4d4d4;">Type</span>
<span id="t59" style="position:absolute;left:1624.44px;top:1595.72px;font-size:30.09px;line-height:30.09px;font-weight:400;color:#d4d4d4;white-space:nowrap;font-family:'Liberation Sans', sans-serif;transform:scaleX(1.0357);transform-origin:0 0;-webkit-text-stroke:0.50px #d4d4d4;">Entry Price</span>
<span id="t60" style="position:absolute;left:2006.54px;top:1595.72px;font-size:30.09px;line-height:30.09px;font-weight:400;color:#d4d4d4;white-space:nowrap;font-family:'Liberation Sans', sans-serif;-webkit-text-stroke:0.50px #d4d4d4;">Lot Size</span>
<span id="t61" style="position:absolute;left:2310.59px;top:1595.72px;font-size:30.09px;line-height:30.09px;font-weight:400;color:#d4d4d4;white-space:nowrap;font-family:'Liberation Sans', sans-serif;transform:scaleX(1.0304);transform-origin:0 0;-webkit-text-stroke:0.50px #d4d4d4;">Stop Loss</span>
<span id="t62" style="position:absolute;left:2668.29px;top:1595.72px;font-size:30.09px;line-height:30.09px;font-weight:400;color:#d4d4d4;white-space:nowrap;font-family:'Liberation Sans', sans-serif;transform:scaleX(1.0482);transform-origin:0 0;-webkit-text-stroke:0.50px #d4d4d4;">Take Profit</span>
<span id="t63" style="position:absolute;left:3048.20px;top:1595.72px;font-size:30.09px;line-height:30.09px;font-weight:400;color:#d4d4d4;white-space:nowrap;font-family:'Liberation Sans', sans-serif;transform:scaleX(1.0999);transform-origin:0 0;-webkit-text-stroke:0.50px #d4d4d4;">Status</span>
<span id="t64" style="position:absolute;left:1813.28px;top:1695.09px;font-size:29.07px;line-height:29.07px;font-weight:400;color:#fff;white-space:nowrap;font-family:'Liberation Sans', sans-serif;transform:scaleX(1.1395);transform-origin:0 0;-webkit-text-stroke:0.50px #fff;">No trades yet</span>
<span id="t65" style="position:absolute;left:569.70px;top:1875.13px;font-size:38.23px;line-height:38.23px;font-weight:400;color:#fff;white-space:nowrap;font-family:'Liberation Sans', sans-serif;transform:scaleX(1.0516);transform-origin:0 0;-webkit-text-stroke:0.9px #fff;">My Assets</span>
<div style="position:absolute;left:3066px;top:1850.5px;width:189.5999999999999px;height:86.90000000000009px;background:#0b5cff;border-radius:22px;"></div>
<span id="t66" style="position:absolute;left:3104.51px;top:1878.56px;font-size:30.52px;line-height:30.52px;font-weight:400;color:#fff;white-space:nowrap;font-family:'Liberation Sans', sans-serif;transform:scaleX(1.0740);transform-origin:0 0;-webkit-text-stroke:0.50px #fff;">Deposit</span>
<div style="position:absolute;left:772.3px;top:2010px;width:116.60000000000002px;height:52px;background:#2e2e2e;border-radius:12px;"></div>
<span id="t67" style="position:absolute;left:576.77px;top:2024.34px;font-size:29.36px;line-height:29.36px;font-weight:400;color:#e0e0e0;white-space:nowrap;font-family:'Liberation Sans', sans-serif;transform:scaleX(0.9825);transform-origin:0 0;">Your Assets</span>
<span id="t68" style="position:absolute;left:787.56px;top:2024.34px;font-size:29.36px;line-height:29.36px;font-weight:700;color:#fff;white-space:nowrap;font-family:'Liberation Sans', sans-serif;transform:scaleX(0.9368);transform-origin:0 0;">Bonds</span>
<span id="t69" style="position:absolute;left:930.20px;top:2024.34px;font-size:29.36px;line-height:29.36px;font-weight:400;color:#e0e0e0;white-space:nowrap;font-family:'Liberation Sans', sans-serif;transform:scaleX(0.9552);transform-origin:0 0;">Forex</span>
<span id="t70" style="position:absolute;left:1061.59px;top:2024.34px;font-size:29.36px;line-height:29.36px;font-weight:400;color:#e0e0e0;white-space:nowrap;font-family:'Liberation Sans', sans-serif;">Futures</span>
<div style="position:absolute;left:2648px;top:1986px;width:599.8px;height:90px;background:linear-gradient(90deg,#2f324e 0%,#393c59 45%,#45496a 100%);border-radius:14px 46px 0 0 / 14px 65px 0 0;overflow:hidden;"><svg style="position:absolute;left:0px;top:0px;width:600px;height:90px;" viewBox="0 0 600 90"><path d="M554 0 L600 0 L600 67 C585 58 558 38 554 22 Z" fill="#5b5b63"/></svg></div>
<svg style="position:absolute;left:2680.2px;top:2010.7px;width:39.3px;height:30.5px;" viewBox="0 0 39 30"><rect x="1.5" y="1.5" width="36" height="27" rx="5" fill="none" stroke="#fff" stroke-width="3"/><path d="M8 9 L19.5 16 L31 9" stroke="#fff" stroke-width="3" fill="none"/></svg>
<span id="t71" style="position:absolute;left:2736.13px;top:2012.29px;font-size:29.65px;line-height:29.65px;font-weight:400;color:#fff;white-space:nowrap;font-family:'Liberation Sans', sans-serif;transform:scaleX(1.0199);transform-origin:0 0;">Send us a message</span>
<span id="t72" style="position:absolute;left:3074.42px;top:2009.54px;font-size:31.25px;line-height:31.25px;font-weight:700;color:#fff;white-space:nowrap;font-family:'Liberation Sans', sans-serif;transform:scaleX(0.8629);transform-origin:0 0;">jivochat</span>
<div style="position:absolute;left:3326px;top:8px;width:2px;height:2050px;background:#151515;"></div>
</body></html>
